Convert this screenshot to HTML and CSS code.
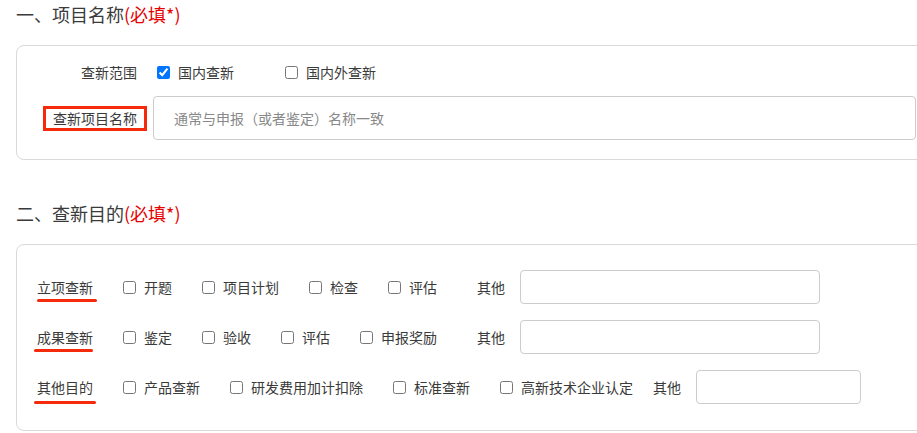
FILE: index.html
```html
<!DOCTYPE html>
<html lang="zh-CN">
<head>
  <meta charset="UTF-8" />
  <meta name="viewport" content="width=device-width, initial-scale=1.0"/>
  <title>查新委托</title>
  <link rel="stylesheet" href="styles.css">
</head>
<body>

  <h2 class="section-title">一、项目名称<span class="required">(必填*)</span></h2>
  <div class="card card-name">
    <div class="row row-scope">
      <div class="label">查新范围</div>
      <label class="option"><input type="checkbox" checked><span>国内查新</span></label>
      <label class="option option-wide"><input type="checkbox"><span>国内外查新</span></label>
    </div>
    <div class="row row-title">
      <div class="label"><span class="boxed">查新项目名称</span></div>
      <input class="text-input title-input" type="text" placeholder="通常与申报（或者鉴定）名称一致">
    </div>
  </div>

  <h2 class="section-title second">二、查新目的<span class="required">(必填*)</span></h2>
  <div class="card card-purpose">
    <div class="purpose-row">
      <span class="purpose-label mark-1">立项查新</span>
      <div class="options fixed">
        <label class="option"><input type="checkbox"><span>开题</span></label>
        <label class="option"><input type="checkbox"><span>项目计划</span></label>
        <label class="option"><input type="checkbox"><span>检查</span></label>
        <label class="option"><input type="checkbox"><span>评估</span></label>
      </div>
      <span class="other">其他</span>
      <input class="text-input other-input" type="text">
    </div>
    <div class="purpose-row">
      <span class="purpose-label mark-2">成果查新</span>
      <div class="options fixed">
        <label class="option"><input type="checkbox"><span>鉴定</span></label>
        <label class="option"><input type="checkbox"><span>验收</span></label>
        <label class="option"><input type="checkbox"><span>评估</span></label>
        <label class="option"><input type="checkbox"><span>申报奖励</span></label>
      </div>
      <span class="other">其他</span>
      <input class="text-input other-input" type="text">
    </div>
    <div class="purpose-row">
      <span class="purpose-label mark-3">其他目的</span>
      <div class="options">
        <label class="option"><input type="checkbox"><span>产品查新</span></label>
        <label class="option"><input type="checkbox"><span>研发费用加计扣除</span></label>
        <label class="option"><input type="checkbox"><span>标准查新</span></label>
        <label class="option"><input type="checkbox"><span>高新技术企业认定</span></label>
      </div>
      <span class="other">其他</span>
      <input class="text-input other-input short" type="text">
    </div>
  </div>

</body>
</html>
```

FILE: styles.css
```css
body {
  margin: 0;
  padding: 0 16px;
  color: #3a3a3a;
  font-family: "Microsoft YaHei", "Noto Sans CJK SC", "Noto Sans", sans-serif;
  font-size: 14px;
  overflow: hidden;
}

.section-title {
  margin: 0 0 17px;
  font-size: 18px;
  font-weight: normal;
  line-height: 28px;
  color: #3a3a3a;
}

.section-title.second {
  margin-top: 39px;
}

.required {
  color: #e60000;
}

.card {
  width: 940px;
  border: 1px solid #d9d9d9;
  border-radius: 8px;
  background: #fff;
}

/* 项目名称 */
.card-name {
  padding: 14px 0 19px;
}

.row {
  display: flex;
  align-items: center;
}

.row-scope {
  height: 24px;
  margin-bottom: 12px;
}

.label {
  width: 130px;
  flex-shrink: 0;
  padding-right: 10px;
  box-sizing: border-box;
  text-align: right;
  line-height: 20px;
}

.row-title .label {
  padding-right: 0;
}

.boxed {
  display: inline-block;
  border: 3px solid #f52a0a;
  padding: 0 7px;
  line-height: 19px;
}

.row-scope .option:first-of-type {
  margin-left: 10px;
}

.option {
  display: inline-flex;
  align-items: center;
  line-height: 20px;
  white-space: nowrap;
}

.option input {
  width: 13px;
  height: 13px;
  margin: 0 8px 0 0;
}

.option-wide {
  margin-left: 51px;
}

.text-input {
  box-sizing: border-box;
  border: 1px solid #ccc;
  border-radius: 4px;
  font-family: inherit;
  font-size: 14px;
  color: #333;
  outline: none;
}

.text-input::placeholder {
  color: #888;
}

.title-input {
  width: 763px;
  height: 44px;
  margin-left: 6px;
  padding: 0 20px;
}

/* 查新目的 */
.card-purpose {
  padding: 25px 0 26px 20px;
  box-sizing: border-box;
}

.purpose-row {
  display: flex;
  align-items: center;
  height: 34px;
  margin-bottom: 16px;
}

.purpose-row:last-child {
  margin-bottom: 0;
}

.purpose-label {
  position: relative;
  line-height: 20px;
  margin-right: 30px;
  white-space: nowrap;
}

.purpose-label::after {
  content: "";
  position: absolute;
  height: 3px;
  border-radius: 2px;
  background: #f52a0a;
}

.mark-1::after {
  left: 0;
  width: 60px;
  top: 22px;
}

.mark-2::after {
  left: -3px;
  width: 59px;
  top: 22px;
}

.mark-3::after {
  left: -3px;
  width: 62px;
  top: 24px;
}

.options {
  display: flex;
  gap: 30px;
}

.options.fixed {
  min-width: 334px;
}

.other {
  margin-left: 20px;
  margin-right: 15px;
  line-height: 20px;
}

.other-input {
  width: 300px;
  height: 34px;
}

.other-input.short {
  width: 165px;
}
```
